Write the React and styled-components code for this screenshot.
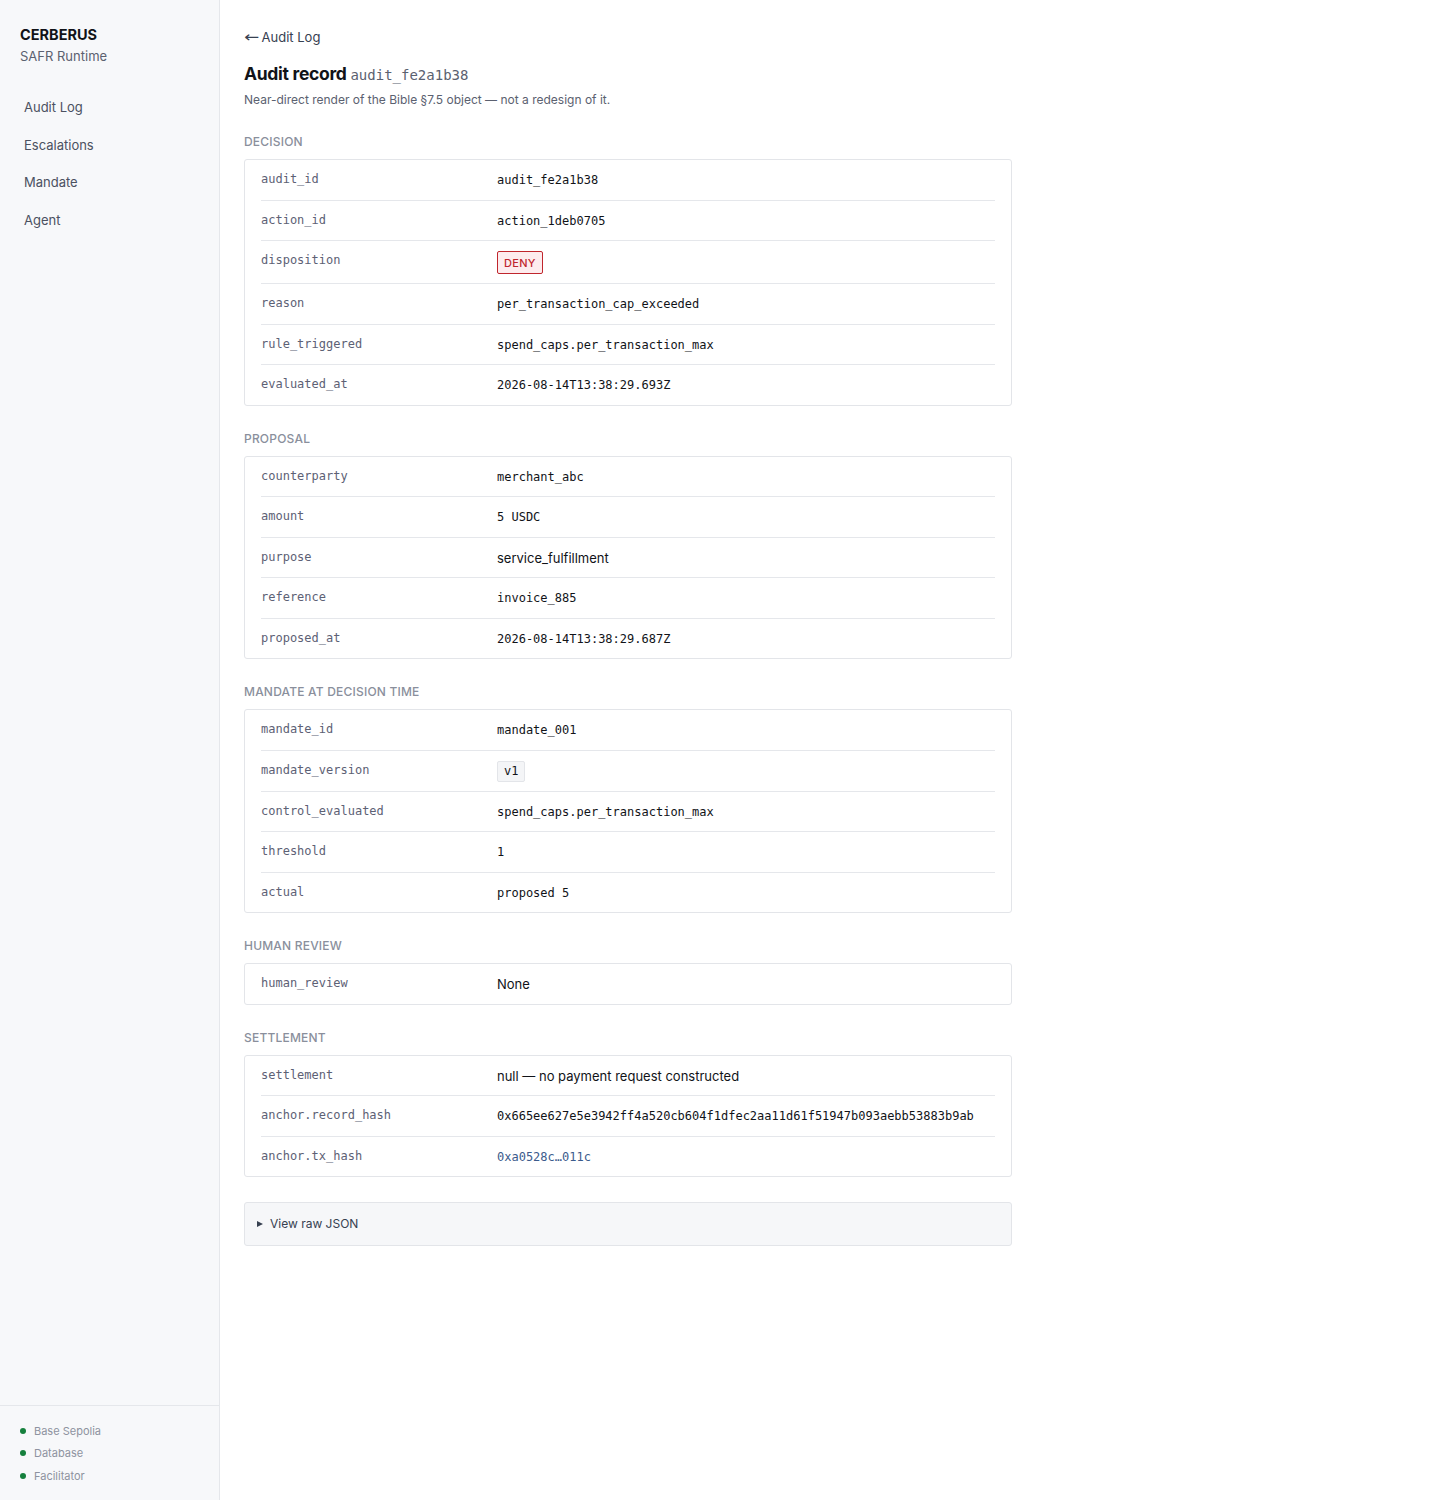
import React from "react";
import styled, { createGlobalStyle } from "styled-components";

const GlobalStyle = createGlobalStyle`
  html, body {
    margin: 0;
    padding: 0;
    background: #ffffff;
    font-family: Inter, "Noto Sans", sans-serif;
    color: #111318;
  }
  * {
    box-sizing: border-box;
  }
`;

const MONO = `"DejaVu Sans Mono", "Liberation Mono", monospace`;

const sections = [
  {
    title: "Decision",
    rows: [
      { key: "audit_id", value: "audit_fe2a1b38" },
      { key: "action_id", value: "action_1deb0705" },
      { key: "disposition", value: "DENY", kind: "deny" },
      { key: "reason", value: "per_transaction_cap_exceeded" },
      { key: "rule_triggered", value: "spend_caps.per_transaction_max" },
      { key: "evaluated_at", value: "2026-08-14T13:38:29.693Z" },
    ],
  },
  {
    title: "Proposal",
    rows: [
      { key: "counterparty", value: "merchant_abc" },
      { key: "amount", value: "5 USDC" },
      { key: "purpose", value: "service_fulfillment", kind: "text" },
      { key: "reference", value: "invoice_885" },
      { key: "proposed_at", value: "2026-08-14T13:38:29.687Z" },
    ],
  },
  {
    title: "Mandate at decision time",
    rows: [
      { key: "mandate_id", value: "mandate_001" },
      { key: "mandate_version", value: "v1", kind: "chip" },
      { key: "control_evaluated", value: "spend_caps.per_transaction_max" },
      { key: "threshold", value: "1" },
      { key: "actual", value: "proposed 5" },
    ],
  },
  {
    title: "Human review",
    rows: [{ key: "human_review", value: "None", kind: "text" }],
  },
  {
    title: "Settlement",
    rows: [
      { key: "settlement", value: "null — no payment request constructed", kind: "text" },
      {
        key: "anchor.record_hash",
        value: "0x665ee627e5e3942ff4a520cb604f1dfec2aa11d61f51947b093aebb53883b9ab",
      },
      { key: "anchor.tx_hash", value: "0xa0528c…011c", kind: "link" },
    ],
  },
];

const navItems = ["Audit Log", "Escalations", "Mandate", "Agent"];
const services = ["Base Sepolia", "Database", "Facilitator"];

const App = () => {
  return (
    <>
      <GlobalStyle />
      <Shell>
        <Sidebar>
          <Brand>
            <BrandName>CERBERUS</BrandName>
            <BrandSub>SAFR Runtime</BrandSub>
          </Brand>
          <Nav>
            {navItems.map((item) => (
              <NavItem key={item}>{item}</NavItem>
            ))}
          </Nav>
          <Health>
            {services.map((s) => (
              <HealthItem key={s}>
                <Dot />
                {s}
              </HealthItem>
            ))}
          </Health>
        </Sidebar>

        <Main>
          <BackLink>
            <Arrow>←</Arrow>Audit Log
          </BackLink>
          <Title>
            Audit record <TitleId>audit_fe2a1b38</TitleId>
          </Title>
          <Subtitle>
            Near-direct render of the Bible §7.5 object — not a redesign of it.
          </Subtitle>

          {sections.map((section) => (
            <Section key={section.title}>
              <SectionTitle>{section.title}</SectionTitle>
              <Card>
                {section.rows.map((row) => (
                  <Row key={row.key}>
                    <Key>{row.key}</Key>
                    <Value row={row} />
                  </Row>
                ))}
              </Card>
            </Section>
          ))}

          <RawJson>
            <summary>View raw JSON</summary>
          </RawJson>
        </Main>
      </Shell>
    </>
  );
};

const Value = ({ row }) => {
  if (row.kind === "deny") return <DenyBadge>{row.value}</DenyBadge>;
  if (row.kind === "chip") return <Chip>{row.value}</Chip>;
  if (row.kind === "text") return <TextValue>{row.value}</TextValue>;
  return <MonoValue $link={row.kind === "link"}>{row.value}</MonoValue>;
};

const Shell = styled.div`
  display: flex;
  min-height: 100vh;
`;

const Sidebar = styled.aside`
  display: flex;
  flex-direction: column;
  width: 220px;
  flex-shrink: 0;
  min-height: 100vh;
  background: #f7f8fa;
  border-right: 1px solid #e5e7eb;
`;

const Brand = styled.div`
  padding: 25px 20px 0;
`;

const BrandName = styled.div`
  font-size: 14.5px;
  font-weight: 700;
  line-height: 20px;
  color: #111318;
`;

const BrandSub = styled.div`
  margin-top: 2px;
  font-size: 13px;
  line-height: 18px;
  color: #5b6170;
`;

const Nav = styled.nav`
  display: flex;
  flex-direction: column;
  padding: 24px 12px 0;
  flex: 1;
`;

const NavItem = styled.div`
  padding: 9px 12px;
  font-size: 13px;
  line-height: 19.7px;
  color: #4b5161;
  cursor: pointer;
`;

const Health = styled.div`
  display: flex;
  flex-direction: column;
  gap: 6px;
  padding: 17px 20px 16px;
  border-top: 1px solid #e5e7eb;
`;

const HealthItem = styled.div`
  display: flex;
  align-items: center;
  gap: 8px;
  font-size: 11px;
  line-height: 16.5px;
  color: #8e93a0;
`;

const Dot = styled.span`
  width: 6px;
  height: 6px;
  border-radius: 50%;
  background: #15803d;
`;

const Main = styled.main`
  flex: 1;
  padding: 28px 24px 60px;
  max-width: 816px;
  box-sizing: content-box;
`;

const BackLink = styled.div`
  font-size: 13px;
  line-height: 18px;
  color: #374151;
  cursor: pointer;
`;

const Arrow = styled.span`
  display: inline-block;
  font-family: "DejaVu Sans", sans-serif;
  font-size: 15px;
  transform: scaleX(1.2);
  transform-origin: left center;
  margin-right: 5px;
`;

const Title = styled.h1`
  margin: 16px 0 0;
  font-size: 17.5px;
  font-weight: 700;
  line-height: 24px;
  letter-spacing: -0.3px;
  color: #111318;
`;

const TitleId = styled.span`
  font-family: ${MONO};
  font-size: 14px;
  font-weight: 400;
  letter-spacing: 0;
  color: #5b6170;
`;

const Subtitle = styled.p`
  margin: 5px 0 0;
  font-size: 12px;
  line-height: 16px;
  color: #5b6170;
`;

const Section = styled.section`
  margin-top: 26px;
  & + & {
    margin-top: 25px;
  }
`;

const SectionTitle = styled.h2`
  margin: 0 0 9px;
  font-size: 12px;
  font-weight: 500;
  line-height: 16px;
  text-transform: uppercase;
  letter-spacing: 0.2px;
  color: #8a8f9c;
`;

const Card = styled.div`
  width: 768px;
  padding: 0 16px;
  border: 1px solid #e3e5e9;
  border-radius: 3px;
  background: #ffffff;
`;

const Row = styled.div`
  display: grid;
  grid-template-columns: 220px 1fr;
  column-gap: 16px;
  align-items: start;
  padding: 11px 0 9px;
  border-bottom: 1px solid #e5e7eb;
  &:last-child {
    border-bottom: none;
  }
`;

const Key = styled.div`
  font-family: ${MONO};
  font-size: 12px;
  line-height: 19.5px;
  color: #5d6175;
  margin-top: -1px;
`;

const MonoValue = styled.div`
  font-family: ${MONO};
  font-size: 12px;
  line-height: 19.5px;
  color: ${(p) => (p.$link ? "#3b5b8c" : "#111318")};
`;

const TextValue = styled.div`
  font-size: 13px;
  line-height: 19.5px;
  color: #111318;
`;

const DenyBadge = styled.span`
  justify-self: start;
  display: inline-block;
  margin-top: -1px;
  padding: 4px 6px 3px;
  font-size: 11px;
  font-weight: 500;
  line-height: 14px;
  letter-spacing: 0.3px;
  color: #c0262d;
  background: #fdecee;
  border: 1px solid #c0262d;
  border-radius: 2px;
`;

const Chip = styled.span`
  justify-self: start;
  display: inline-block;
  margin-top: -1px;
  padding: 2px 6px;
  font-family: ${MONO};
  font-size: 12px;
  line-height: 15px;
  color: #111318;
  background: #f4f5f7;
  border: 1px solid #e3e5e9;
  border-radius: 2px;
`;

const RawJson = styled.details`
  width: 768px;
  margin-top: 25px;
  border: 1px solid #e3e5e9;
  border-radius: 3px;
  background: #f6f7f9;

  summary {
    display: flex;
    align-items: center;
    padding: 13px 12px;
    font-size: 12px;
    line-height: 16px;
    color: #374151;
    cursor: pointer;
    list-style: none;
  }
  summary::-webkit-details-marker {
    display: none;
  }
  summary::before {
    content: "";
    width: 0;
    height: 0;
    margin-right: 7px;
    border-left: 6px solid #374151;
    border-top: 3.5px solid transparent;
    border-bottom: 3.5px solid transparent;
  }
`;

export default App;
